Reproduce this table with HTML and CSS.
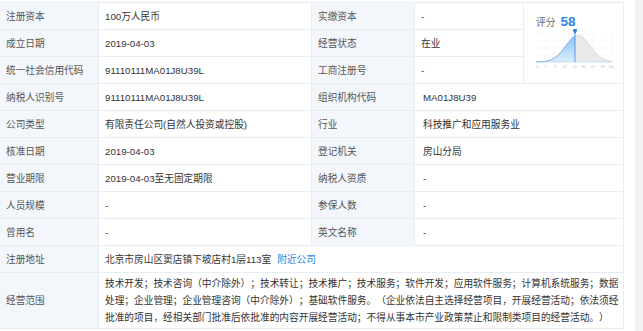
FILE: index.html
```html
<!DOCTYPE html>
<html lang="zh-CN">
<head>
<meta charset="utf-8">
<title>工商信息</title>
<link rel="stylesheet" href="styles.css">
</head>
<body>
<div class="page">
  <div class="table">
    <div class="cell lbl">注册资本</div>
    <div class="cell val">100万人民币</div>
    <div class="cell lbl">实缴资本</div>
    <div class="cell val">-</div>
    <div class="cell score">
      <div class="score-head"><span class="score-label">评分</span><span class="score-num">58</span></div>
      <svg class="chart" width="80" height="42" viewBox="0 0 80 42">
        <defs>
          <linearGradient id="blueFill" x1="0" y1="0" x2="0" y2="1">
            <stop offset="0" stop-color="#8cc2f3"/>
            <stop offset="1" stop-color="#dcedfc"/>
          </linearGradient>
        </defs>
        <g stroke="#f1f3f6" stroke-width="0.6">
          <line x1="0" y1="5" x2="76" y2="5"/>
          <line x1="0" y1="12" x2="76" y2="12"/>
          <line x1="0" y1="19" x2="76" y2="19"/>
          <line x1="0" y1="26" x2="76" y2="26"/>
          <line x1="9.5" y1="5" x2="9.5" y2="33"/>
          <line x1="19" y1="5" x2="19" y2="33"/>
          <line x1="28.5" y1="5" x2="28.5" y2="33"/>
          <line x1="47.5" y1="5" x2="47.5" y2="33"/>
          <line x1="57" y1="5" x2="57" y2="33"/>
          <line x1="66.5" y1="5" x2="66.5" y2="33"/>
          <line x1="76" y1="5" x2="76" y2="33"/>
        </g>
        <path d="M39,33 L39,6.83 L42,6 L46,7.46 L50,11.38 L54,16.62 L58,21.9 L62,26.27 L66,29.35 L70,31.23 L74,32.23 L76,32.51 L76,33 Z" fill="#e9e9eb"/>
        <path d="M39,6.83 L42,6 L46,7.46 L50,11.38 L54,16.62 L58,21.9 L62,26.27 L66,29.35 L70,31.23 L74,32.23 L76,32.51" fill="none" stroke="#d6d6d8" stroke-width="0.7"/>
        <path d="M0,33 L0,32.94 L4,32.82 L8,32.51 L12,31.81 L16,30.42 L20,27.97 L24,24.23 L28,19.33 L32,13.92 L36,9.18 L39,6.83 L39,33 Z" fill="url(#blueFill)"/>
        <path d="M0,32.94 L4,32.82 L8,32.51 L12,31.81 L16,30.42 L20,27.97 L24,24.23 L28,19.33 L32,13.92 L36,9.18 L39,6.83" fill="none" stroke="#5ea3e8" stroke-width="0.8"/>
        <line x1="0" y1="33" x2="76" y2="33" stroke="#a9cdf0" stroke-width="0.6"/>
        <line x1="39" y1="2" x2="39" y2="33" stroke="#3b86e0" stroke-width="0.8"/>
        <path d="M39,5 L37.4,2.6 A2,2 0 1 1 40.6,2.6 Z" fill="#2f7fe0"/>
        <g class="axis" font-size="3.6" fill="#a9bfd9" text-anchor="middle">
          <text x="0.8" y="38.6">0</text>
          <text x="9.5" y="38.6">1</text>
          <text x="19" y="38.6">3</text>
          <text x="28.5" y="38.6">13</text>
          <text x="39" y="38.6">50</text>
          <text x="47.5" y="38.6">85</text>
          <text x="57" y="38.6">97</text>
          <text x="66.5" y="38.6">99</text>
          <text x="75" y="38.6">100</text>
        </g>
      </svg>
    </div>

    <div class="cell lbl">成立日期</div>
    <div class="cell val">2019-04-03</div>
    <div class="cell lbl">经营状态</div>
    <div class="cell val">在业</div>

    <div class="cell lbl">统一社会信用代码</div>
    <div class="cell val">91110111MA01J8U39L</div>
    <div class="cell lbl">工商注册号</div>
    <div class="cell val">-</div>

    <div class="cell lbl">纳税人识别号</div>
    <div class="cell val">91110111MA01J8U39L</div>
    <div class="cell lbl">组织机构代码</div>
    <div class="cell val span2">MA01J8U39</div>

    <div class="cell lbl">公司类型</div>
    <div class="cell val">有限责任公司(自然人投资或控股)</div>
    <div class="cell lbl">行业</div>
    <div class="cell val span2">科技推广和应用服务业</div>

    <div class="cell lbl">核准日期</div>
    <div class="cell val">2019-04-03</div>
    <div class="cell lbl">登记机关</div>
    <div class="cell val span2">房山分局</div>

    <div class="cell lbl">营业期限</div>
    <div class="cell val">2019-04-03至无固定期限</div>
    <div class="cell lbl">纳税人资质</div>
    <div class="cell val span2">-</div>

    <div class="cell lbl">人员规模</div>
    <div class="cell val">-</div>
    <div class="cell lbl">参保人数</div>
    <div class="cell val span2">-</div>

    <div class="cell lbl">曾用名</div>
    <div class="cell val">-</div>
    <div class="cell lbl">英文名称</div>
    <div class="cell val span2">-</div>

    <div class="cell lbl">注册地址</div>
    <div class="cell val span4">北京市房山区窦店镇下坡店村1层113室<a class="link" href="#">附近公司</a></div>

    <div class="cell lbl">经营范围</div>
    <div class="cell val span4 scope"><p class="scope-text">技术开发；技术咨询（中介除外）；技术转让；技术推广；技术服务；软件开发；应用软件服务；计算机系统服务；数据<br>处理；企业管理；企业管理咨询（中介除外）；基础软件服务。（企业依法自主选择经营项目，开展经营活动；依法须经<br>批准的项目，经相关部门批准后依批准的内容开展经营活动；不得从事本市产业政策禁止和限制类项目的经营活动。）</p></div>
  </div>
  <div class="gap"></div>
  <div class="side"></div>
</div>
</body>
</html>
```

FILE: styles.css
```css
* {
  box-sizing: border-box;
}

html, body {
  margin: 0;
  padding: 0;
  background: #ffffff;
}

body {
  font-family: "Liberation Sans", "Noto Sans CJK SC", sans-serif;
  font-size: 9.7px;
  color: #333333;
  text-spacing-trim: space-all;
}

.page {
  display: flex;
  height: 331px;
  overflow: hidden;
}

.table {
  flex: 0 0 624px;
  margin-top: 2px;
  display: grid;
  grid-template-columns: 99px 213px 103px 109px 100px;
  grid-template-rows: repeat(10, 27px) 56px;
  border-top: 1px solid #e6edf4;
  align-self: flex-start;
}

.cell {
  display: flex;
  align-items: center;
  padding: 0 7px;
  border-right: 1px solid #e6edf4;
  border-bottom: 1px solid #e6edf4;
  white-space: nowrap;
  line-height: 17px;
}

.lbl {
  background: #f3f7fb;
  color: #555555;
  padding-left: 6px;
}

.val {
  background: #ffffff;
  color: #333333;
  padding-left: 6px;
}

.span2 {
  grid-column: span 2;
  padding-left: 8px;
}

.span4 {
  grid-column: span 4;
}

.score {
  grid-column: 5;
  grid-row: 1 / span 3;
  flex-direction: column;
  align-items: flex-start;
  padding: 12px 0 0 12px;
}

.score-head {
  display: flex;
  align-items: baseline;
  height: 14px;
  line-height: 14px;
}

.score-label {
  color: #666666;
  font-size: 9.7px;
}

.score-num {
  margin-left: 5px;
  color: #2a84e8;
  font-size: 13.5px;
  font-weight: bold;
}

.chart {
  display: block;
}

.axis {
  font-family: "Liberation Sans", sans-serif;
}

.link {
  margin-left: 6px;
  color: #2a84e8;
  text-decoration: none;
}

.scope {
  padding: 0 0 0 6px;
  line-height: 17px;
}

.scope-text {
  margin: 0;
  white-space: nowrap;
}

.gap {
  flex: 0 0 11px;
}

.side {
  flex: 1 1 auto;
  background: #f2f2f3;
}
```
